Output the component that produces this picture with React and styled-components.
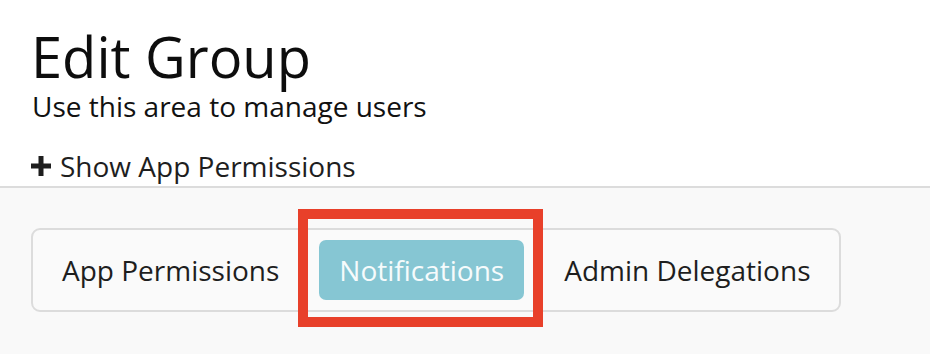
import React from 'react';
import styled, { createGlobalStyle } from 'styled-components';

const GlobalStyle = createGlobalStyle`
  html, body {
    margin: 0;
    padding: 0;
    background: #ffffff;
    font-family: "Open Sans", "Liberation Sans", sans-serif;
    color: #111;
  }
`;

const Page = styled.div`
  width: 930px;
  height: 354px;
  display: flex;
  flex-direction: column;
  overflow: hidden;
`;

const Header = styled.header`
  padding: 24px 0 0 31px;
  border-bottom: 2px solid #dcdcdc;
`;

const Title = styled.h1`
  margin: 0;
  font-size: 56px;
  font-weight: 400;
  line-height: 64px;
  color: #0d0d0d;
`;

const Subtitle = styled.p`
  margin: 0 0 0 1px;
  font-size: 28px;
  line-height: 36px;
  color: #111;
`;

const Toggle = styled.button`
  display: flex;
  align-items: center;
  gap: 8px;
  margin: 22px 0 0 -1px;
  padding: 0;
  height: 40px;
  border: 0;
  background: none;
  font-family: inherit;
  font-size: 28px;
  color: #1e1e1e;
  cursor: pointer;
`;

const Body = styled.section`
  flex: 1;
  background: #f9f9f9;
  padding: 40px 0 0 31px;
`;

const TabGroup = styled.div`
  display: inline-flex;
  gap: 19px;
  padding: 10px 8px;
  border: 2px solid #dcdcdc;
  border-radius: 9px;
  background: #fafafa;
`;

const Tab = styled.button`
  position: relative;
  height: 60px;
  padding: 0 ${p => (p.$active ? '20px' : '21px')};
  border: 0;
  border-radius: 7px;
  background: ${p => (p.$active ? '#86c6d3' : 'transparent')};
  color: ${p => (p.$active ? '#f6fbfc' : '#1e1e1e')};
  font-family: inherit;
  font-size: 28px;
  cursor: pointer;
`;

const Highlight = styled.span`
  position: absolute;
  top: -31px;
  left: -21px;
  right: -19px;
  bottom: -27px;
  border: 10px solid #e8402a;
  pointer-events: none;
`;

const PlusIcon = () => (
  <svg width="22" height="22" viewBox="0 0 22 22">
    <path d="M11 1v20M1 11h20" stroke="#1e1e1e" strokeWidth="5" />
  </svg>
);

const tabs = ['App Permissions', 'Notifications', 'Admin Delegations'];

const App = () => (
  <>
    <GlobalStyle />
    <Page>
      <Header>
        <Title>Edit Group</Title>
        <Subtitle>Use this area to manage users</Subtitle>
        <Toggle>
          <PlusIcon />
          Show App Permissions
        </Toggle>
      </Header>
      <Body>
        <TabGroup>
          {tabs.map(t => (
            <Tab key={t} $active={t === 'Notifications'}>
              {t}
              {t === 'Notifications' && <Highlight />}
            </Tab>
          ))}
        </TabGroup>
      </Body>
    </Page>
  </>
);

export default App;
